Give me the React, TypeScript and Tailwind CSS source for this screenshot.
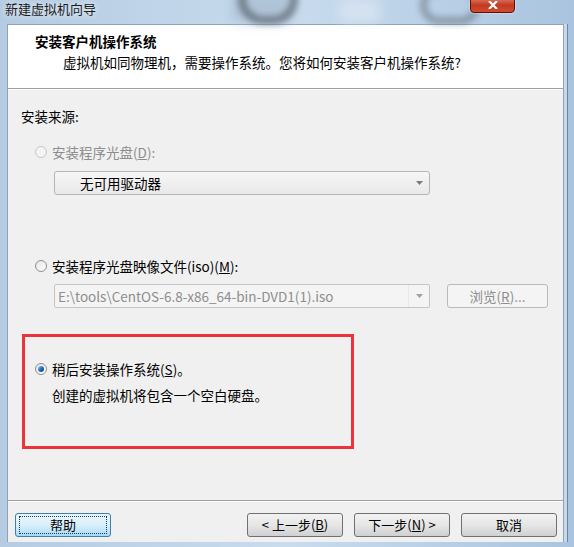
import React from 'react';

const font = { fontFamily: '"Noto Sans CJK SC", "Microsoft YaHei", sans-serif' };

const Radio: React.FC<{ checked?: boolean; disabled?: boolean }> = ({ checked, disabled }) => (
  <span
    className={`inline-flex items-center justify-center w-[12px] h-[12px] rounded-full border ${
      disabled ? 'border-[#c8c8c8] bg-[#f4f4f4]' : 'border-[#8e8f8f] bg-gradient-to-br from-[#e6e6e6] to-[#ffffff]'
    }`}
  >
    {checked && (
      <span className="w-[6px] h-[6px] rounded-full bg-gradient-to-br from-[#8ad0ff] via-[#1f6fbd] to-[#0b3f7a]" />
    )}
  </span>
);

const Arrow: React.FC<{ color?: string }> = ({ color = '#7a7a7a' }) => (
  <svg width="7" height="4" viewBox="0 0 7 4">
    <polygon points="0,0 7,0 3.5,4" fill={color} />
  </svg>
);

const Btn: React.FC<{ children: React.ReactNode; focused?: boolean }> = ({ children, focused }) => (
  <div
    className={`h-[24px] w-[96px] rounded-[3px] border flex items-center justify-center text-[13px] ${
      focused
        ? 'border-[#3c7fb1] bg-gradient-to-b from-[#eaf6fd] via-[#d9f0fc] to-[#a7d9f5] text-black'
        : 'border-[#707070] bg-gradient-to-b from-[#f2f2f2] via-[#e6e6e6] to-[#d0d0d0] text-black'
    }`}
  >
    {focused ? (
      <div className="w-[88px] h-[18px] border border-dotted border-[#1a3d5c] flex items-center justify-center">
        {children}
      </div>
    ) : (
      children
    )}
  </div>
);

export default function App() {
  return (
    <div
      className="w-[574px] h-[547px] relative overflow-hidden flex flex-col bg-gradient-to-r from-[#b4cbe2] via-[#c9dcee] to-[#aac4df] text-[13.5px] text-black"
      style={font}
    >
      {/* blurred desktop glass shapes */}
      <div className="absolute left-[232px] top-[-8px] w-[60px] h-[30px] bg-[#9fb4c8] blur-[6px] opacity-60" />
      <div className="absolute left-[238px] top-[-26px] w-[60px] h-[50px] rounded-full border-[8px] border-[#56606a] blur-[3px] opacity-70" />
      <div className="absolute left-[420px] top-[-14px] w-[60px] h-[38px] rounded-full border-[7px] border-[#6a747e] blur-[3px] opacity-60" />
      <div className="absolute left-[340px] top-0 w-[40px] h-[22px] bg-[#dfe9f3] blur-[6px] opacity-70" />

      {/* title bar */}
      <div className="relative h-[24px] shrink-0 flex items-start">
        <span className="ml-[5px] -mt-[1px] text-[13px] text-[#1b1b1b] [text-shadow:0_0_6px_#fff]">新建虚拟机向导</span>
        <div className="absolute left-[470px] top-[-3px] w-[45px] h-[16px] rounded-b-[4px] border border-[#5a1208] bg-gradient-to-b from-[#e07a66] via-[#c23a20] to-[#d24a30] flex items-center justify-center shadow-[0_0_2px_#fff]">
          <svg width="10" height="8" viewBox="0 0 10 8">
            <path d="M1 0 L9 8 M9 0 L1 8" stroke="#fff" strokeWidth="2.2" />
          </svg>
        </div>
      </div>

      <div className="flex flex-1 min-h-0">
        <div className="w-[7px] shrink-0" />
        <div className="flex-1 flex flex-col border border-[#8ea3ba] border-b-0">
          {/* header */}
          <div className="h-[64px] shrink-0 bg-white border-b border-[#a0a0a0] pl-[27px] pt-[7px]">
            <div className="font-bold text-[13.5px] leading-[18px]">安装客户机操作系统</div>
            <div className="pl-[28px] mt-[3px] leading-[18px]">虚拟机如同物理机，需要操作系统。您将如何安装客户机操作系统?</div>
          </div>
          <div className="h-px bg-white shrink-0" />

          {/* body */}
          <div className="flex-1 bg-[#f0f0f0] flex flex-col">
            <div className="flex-1 pl-[13px] pr-[15px] pt-[17px]">
              <div className="leading-[18px]">安装来源:</div>

              <div className="mt-[18px] pl-[14px] flex items-center gap-[5px] text-[#8d8d8d] leading-[18px]">
                <Radio disabled />
                <span>
                  安装程序光盘(<span className="underline">D</span>):
                </span>
              </div>
              <div className="ml-[33px] mt-[10px] w-[376px] h-[24px] rounded-[3px] border border-[#b5b5b5] bg-gradient-to-b from-[#f6f6f6] to-[#e9e9e9] flex items-center">
                <span className="flex-1 pl-[25px]">无可用驱动器</span>
                <span className="w-[20px] flex justify-center">
                  <Arrow />
                </span>
              </div>

              <div className="mt-[62px] pl-[14px] flex items-center gap-[5px] leading-[18px]">
                <Radio />
                <span>
                  安装程序光盘映像文件(iso)(<span className="underline">M</span>):
                </span>
              </div>
              <div className="mt-[9px] flex items-center">
                <div className="ml-[33px] w-[376px] h-[24px] rounded-[2px] border border-[#c4c4c4] bg-[#f4f4f4] flex items-center">
                  <span className="flex-1 pl-[3px] text-[#8d8d8d] h-full flex items-center border-r border-[#e8e8e8]">
                    E:\tools\CentOS-6.8-x86_64-bin-DVD1(1).iso
                  </span>
                  <span className="w-[20px] flex justify-center">
                    <Arrow color="#a0a0a0" />
                  </span>
                </div>
                <div className="ml-[17px]">
                  <div className="h-[24px] w-[101px] rounded-[3px] border border-[#b9b9b9] bg-[#f4f4f4] flex items-center justify-center text-[#8d8d8d]">
                    浏览(<span className="underline">R</span>)...
                  </div>
                </div>
              </div>

              <div className="mt-[26px] ml-[1px] w-[332px] h-[115px] border-[3px] border-[#e8343a] pl-[10px] pt-[23px]">
                <div className="flex items-center gap-[5px] leading-[18px]">
                  <Radio checked />
                  <span>
                    稍后安装操作系统(<span className="underline">S</span>)。
                  </span>
                </div>
                <div className="pl-[17px] mt-[8px] leading-[18px]">创建的虚拟机将包含一个空白硬盘。</div>
              </div>
            </div>

            {/* footer */}
            <div className="h-px bg-[#a0a0a0]" />
            <div className="h-px bg-white" />
            <div className="h-[40px] shrink-0 flex items-start pt-[11px] pl-[7px]">
              <Btn focused>帮助</Btn>
              <div className="ml-[136px]">
                <Btn>&lt; 上一步(<span className="underline">B</span>)</Btn>
              </div>
              <div className="ml-[11px]">
                <Btn>下一步(<span className="underline">N</span>) &gt;</Btn>
              </div>
              <div className="ml-[11px]">
                <Btn>取消</Btn>
              </div>
            </div>
          </div>
        </div>
        <div className="w-[11px] shrink-0 flex">
          <div className="w-[3px] bg-[#c8d9ea]" />
          <div className="w-px bg-[#6d859d]" />
          <div className="flex-1" />
        </div>
      </div>
      <div className="h-[5px] shrink-0" />
    </div>
  );
}
